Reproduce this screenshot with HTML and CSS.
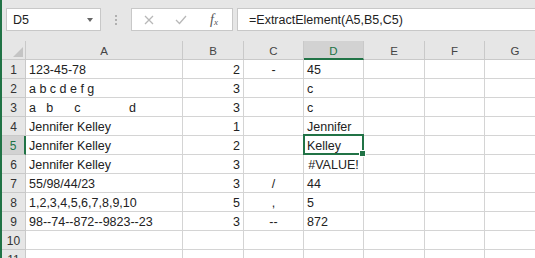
FILE: index.html
```html
<!DOCTYPE html>
<html lang="en">
<head>
    <meta charset="UTF-8">
    <title>ExtractElement</title>
    <link rel="stylesheet" href="styles.css">
</head>
<body>
    <div class="app">
        <div class="formula-bar">
            <div class="name-box">
                <span>D5</span>
                <span class="drop"></span>
            </div>
            <div class="grip"><i></i><i></i><i></i></div>
            <div class="buttons">
                <svg class="btn" width="12" height="10" viewBox="0 0 12 10"><path d="M2 1 L10 9 M10 1 L2 9" stroke="#b8b8b8" stroke-width="1.3" fill="none"/></svg>
                <svg class="btn" width="12" height="10" viewBox="0 0 12 10"><path d="M1 5 L4.5 8.5 L11 1" stroke="#b8b8b8" stroke-width="1.3" fill="none"/></svg>
                <span class="fx">f<sub>x</sub></span>
            </div>
            <div class="formula">=ExtractElement(A5,B5,C5)</div>
        </div>

        <div class="sheet">
            <div class="corner"><svg width="10" height="10" viewBox="0 0 10 10"><polygon points="10,0 10,10 0,10" fill="#c4c4c4"/></svg></div>
            <div class="col-head">A</div>
            <div class="col-head">B</div>
            <div class="col-head">C</div>
            <div class="col-head active">D</div>
            <div class="col-head">E</div>
            <div class="col-head">F</div>
            <div class="col-head">G</div>

            <div class="row-head">1</div>
            <div class="cell">123-45-78</div>
            <div class="cell num">2</div>
            <div class="cell mid">-</div>
            <div class="cell">45</div>
            <div class="cell"></div><div class="cell"></div><div class="cell"></div>

            <div class="row-head">2</div>
            <div class="cell">a b c d e f g</div>
            <div class="cell num">3</div>
            <div class="cell mid"></div>
            <div class="cell">c</div>
            <div class="cell"></div><div class="cell"></div><div class="cell"></div>

            <div class="row-head">3</div>
            <div class="cell pre">a   b      c              d</div>
            <div class="cell num">3</div>
            <div class="cell mid"></div>
            <div class="cell">c</div>
            <div class="cell"></div><div class="cell"></div><div class="cell"></div>

            <div class="row-head">4</div>
            <div class="cell">Jennifer Kelley</div>
            <div class="cell num">1</div>
            <div class="cell mid"></div>
            <div class="cell">Jennifer</div>
            <div class="cell"></div><div class="cell"></div><div class="cell"></div>

            <div class="row-head active">5</div>
            <div class="cell">Jennifer Kelley</div>
            <div class="cell num">2</div>
            <div class="cell mid"></div>
            <div class="cell selected">Kelley</div>
            <div class="cell"></div><div class="cell"></div><div class="cell"></div>

            <div class="row-head">6</div>
            <div class="cell">Jennifer Kelley</div>
            <div class="cell num">3</div>
            <div class="cell mid"></div>
            <div class="cell mid">#VALUE!</div>
            <div class="cell"></div><div class="cell"></div><div class="cell"></div>

            <div class="row-head">7</div>
            <div class="cell">55/98/44/23</div>
            <div class="cell num">3</div>
            <div class="cell mid">/</div>
            <div class="cell">44</div>
            <div class="cell"></div><div class="cell"></div><div class="cell"></div>

            <div class="row-head">8</div>
            <div class="cell">1,2,3,4,5,6,7,8,9,10</div>
            <div class="cell num">5</div>
            <div class="cell mid">,</div>
            <div class="cell">5</div>
            <div class="cell"></div><div class="cell"></div><div class="cell"></div>

            <div class="row-head">9</div>
            <div class="cell">98--74--872--9823--23</div>
            <div class="cell num">3</div>
            <div class="cell mid">--</div>
            <div class="cell">872</div>
            <div class="cell"></div><div class="cell"></div><div class="cell"></div>

            <div class="row-head">10</div>
            <div class="cell"></div><div class="cell"></div><div class="cell"></div><div class="cell"></div>
            <div class="cell"></div><div class="cell"></div><div class="cell"></div>

            <div class="row-head">11</div>
            <div class="cell"></div><div class="cell"></div><div class="cell"></div><div class="cell"></div>
            <div class="cell"></div><div class="cell"></div><div class="cell"></div>
        </div>
    </div>
</body>
</html>
```

FILE: styles.css
```css
body {
    margin: 0;
    background-color: #fff;
    font-family: 'Liberation Sans', Arial, sans-serif;
    font-size: 12.5px;
    color: #222;
    overflow: hidden;
}

.app {
    width: 533px;
    height: 258px;
    border-left: 2px solid #217346;
    overflow: hidden;
}

/* formula bar */
.formula-bar {
    display: flex;
    align-items: stretch;
    height: 23px;
    padding: 8px 0 10px 4px;
    background-color: #e6e6e6;
}

.name-box,
.buttons,
.formula {
    box-sizing: border-box;
    background-color: #fff;
    border: 1px solid #c8c8c8;
}

.name-box {
    width: 95px;
    display: flex;
    align-items: center;
    justify-content: space-between;
    padding: 0 6px 0 6px;
}

.drop {
    width: 0;
    height: 0;
    border-left: 3.5px solid transparent;
    border-right: 3.5px solid transparent;
    border-top: 4px solid #666;
    margin-right: 1px;
}

.grip {
    display: flex;
    flex-direction: column;
    justify-content: center;
    gap: 2px;
    margin: 0 13px 0 14px;
    width: 3px;
}

.grip i {
    display: block;
    width: 2px;
    height: 2px;
    background-color: #b0b0b0;
}

.buttons {
    width: 102px;
    display: flex;
    align-items: center;
    padding-left: 11px;
}

.btn {
    margin-right: 20px;
}

.fx {
    font-family: 'Liberation Serif', serif;
    font-style: italic;
    font-size: 14px;
    color: #555;
    margin-left: 3px;
}

.fx sub {
    font-size: 9px;
    vertical-align: -1px;
}

.formula {
    flex: 1;
    margin-left: 4px;
    border-right: none;
    display: flex;
    align-items: center;
    padding-left: 11px;
}

/* grid */
.sheet {
    display: grid;
    grid-template-columns: 24px 157px 61px 60px 60px 61px 60px 61px;
    grid-auto-rows: 19px;
}

.sheet > div {
    box-sizing: border-box;
    border-right: 1px solid #d4d4d4;
    border-bottom: 1px solid #d4d4d4;
    white-space: nowrap;
    overflow: hidden;
}

.corner {
    background-color: #e6e6e6;
    display: flex;
    align-items: flex-end;
    justify-content: flex-end;
    padding: 0 2px 2px 0;
}

.sheet > .corner,
.sheet > .col-head,
.sheet > .row-head {
    border-color: #c9c9c9;
}

.col-head {
    background-color: #e6e6e6;
    display: flex;
    align-items: center;
    justify-content: center;
    font-size: 11.5px;
    color: #444;
    padding-top: 2px;
}

.row-head {
    background-color: #e6e6e6;
    display: flex;
    align-items: flex-end;
    justify-content: center;
    font-size: 12px;
    color: #333;
    line-height: 16px;
}

.sheet > .col-head.active {
    background-color: #d2d2d2;
    color: #217346;
    border-bottom: 2px solid #217346;
}

.sheet > .row-head.active {
    background-color: #d2d2d2;
    color: #217346;
    border-right: 2px solid #217346;
}

.cell {
    display: flex;
    align-items: flex-end;
    line-height: 15px;
    padding: 0 3px;
}

.cell.num {
    justify-content: flex-end;
}

.cell.mid {
    justify-content: center;
}

.cell.pre {
    white-space: pre;
}

.sheet > .selected {
    position: relative;
    overflow: visible;
}

.selected::after {
    content: "";
    position: absolute;
    top: -2px;
    left: -1px;
    right: -1px;
    bottom: -1px;
    border: 2px solid #217346;
}

.selected::before {
    content: "";
    position: absolute;
    right: -3px;
    bottom: -3px;
    width: 5px;
    height: 5px;
    background-color: #217346;
    border: 1px solid #fff;
    z-index: 1;
}
```
